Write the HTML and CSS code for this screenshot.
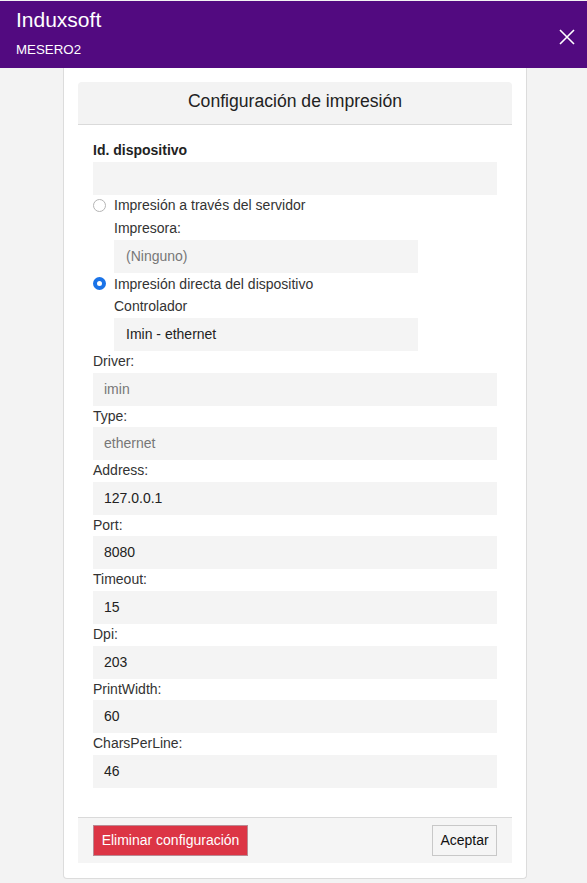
FILE: index.html
```html
<!DOCTYPE html>
<html lang="es">
<head>
<meta charset="utf-8">
<title>Induxsoft</title>
<link rel="stylesheet" href="styles.css">
</head>
<body>
<header class="topbar">
  <div class="brand">
    <div class="app-name">Induxsoft</div>
    <div class="user-name">MESERO2</div>
  </div>
  <button class="close-btn" aria-label="Cerrar">
    <svg width="16" height="16" viewBox="0 0 16 16"><path d="M1 1 L15 15 M15 1 L1 15" stroke="#fff" stroke-width="1.6" fill="none"/></svg>
  </button>
</header>
<main class="card">
  <section class="dialog">
    <div class="dialog-head">Configuración de impresión</div>
    <div class="dialog-body">
      <div class="label bold">Id. dispositivo</div>
      <div class="field"></div>

      <div class="radio-row"><span class="radio"></span>Impresión a través del servidor</div>
      <div class="sub">
        <div class="label">Impresora:</div>
        <div class="field muted pad12">(Ninguno)</div>
      </div>

      <div class="radio-row"><span class="radio checked"></span>Impresión directa del dispositivo</div>
      <div class="sub">
        <div class="label">Controlador</div>
        <div class="field pad12">Imin - ethernet</div>
      </div>

      <div class="label">Driver:</div>
      <div class="field muted">imin</div>
      <div class="label">Type:</div>
      <div class="field muted">ethernet</div>
      <div class="label">Address:</div>
      <div class="field">127.0.0.1</div>
      <div class="label">Port:</div>
      <div class="field">8080</div>
      <div class="label">Timeout:</div>
      <div class="field">15</div>
      <div class="label">Dpi:</div>
      <div class="field">203</div>
      <div class="label">PrintWidth:</div>
      <div class="field">60</div>
      <div class="label">CharsPerLine:</div>
      <div class="field">46</div>
    </div>
    <div class="dialog-foot">
      <button class="btn btn-danger">Eliminar configuración</button>
      <button class="btn btn-default">Aceptar</button>
    </div>
  </section>
</main>
</body>
</html>
```

FILE: styles.css
```css
html, body {
  margin: 0;
  padding: 0;
}
body {
  background: #f3f3f3;
  font-family: "Liberation Sans", Arial, sans-serif;
  font-size: 14px;
  color: #333;
  padding-top: 1px;
}
.topbar {
  height: 67px;
  background: #520a80;
  color: #fff;
  display: flex;
  justify-content: space-between;
  align-items: flex-start;
  box-sizing: border-box;
}
.brand {
  padding-left: 16px;
}
.app-name {
  font-size: 21px;
  line-height: 24px;
  margin-top: 7px;
}
.user-name {
  font-size: 13.3px;
  line-height: 16px;
  margin-top: 10px;
}
.close-btn {
  background: none;
  border: 0;
  padding: 0;
  margin: 28px 12px 0 0;
  width: 16px;
  height: 16px;
  display: block;
  cursor: pointer;
}
.close-btn svg {
  display: block;
}
.card {
  display: block;
  width: 464px;
  box-sizing: border-box;
  margin-left: 63px;
  background: #fff;
  border: 1px solid #dcdcdc;
  border-top: 0;
  border-radius: 0 0 4px 4px;
  padding: 14px 14px 15px 14px;
}
.dialog {
  background: #fff;
}
.dialog-head {
  background: #f3f3f3;
  border-radius: 4px 4px 0 0;
  border-bottom: 1px solid #dadada;
  height: 42px;
  line-height: 38px;
  text-align: center;
  font-size: 17.6px;
  color: #222;
}
.dialog-body {
  padding: 15px 15px 29px 15px;
}
.label {
  line-height: 21.6px;
  height: 21.6px;
  color: #333;
}
.label.bold {
  font-weight: bold;
  color: #222;
}
.field {
  height: 33px;
  line-height: 33px;
  background: #f4f4f4;
  padding-left: 11px;
  color: #222;
  box-sizing: border-box;
}
.field.pad12 {
  padding-left: 12px;
}
.field.muted {
  color: #777;
}
.radio-row {
  display: flex;
  align-items: center;
  gap: 8px;
  height: 21.6px;
  margin-bottom: 2px;
  color: #333;
}
.radio {
  width: 13px;
  height: 13px;
  border-radius: 50%;
  border: 1px solid #b5b5b5;
  box-sizing: border-box;
  background: #fff;
  flex: none;
}
.radio.checked {
  border: 4px solid #1a73e8;
  background: #fff;
}
.sub {
  margin-left: 21px;
  width: 304px;
}
.dialog-foot {
  background: #f5f5f5;
  border-top: 1px solid #dadada;
  display: flex;
  justify-content: space-between;
  align-items: center;
  height: 46px;
  box-sizing: border-box;
  padding: 0 15px;
}
.btn {
  font-family: "Liberation Sans", Arial, sans-serif;
  font-size: 14px;
  height: 31px;
  box-sizing: border-box;
  padding: 0 7px;
  cursor: pointer;
}
.btn-danger {
  background: #dc3545;
  color: #fff;
  border: 1px solid #b98a93;
  width: 155px;
}
.btn-default {
  background: #f5f5f5;
  color: #111;
  border: 1px solid #c8c8c8;
  width: 65px;
}
```
